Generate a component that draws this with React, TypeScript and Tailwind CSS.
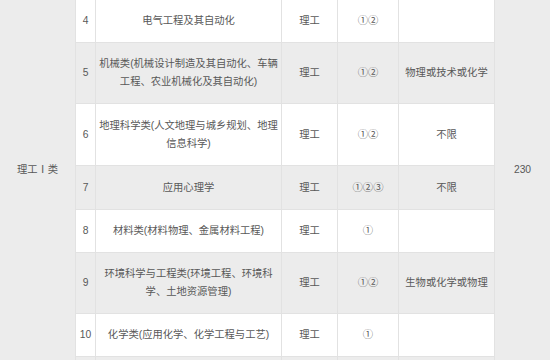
const rows = [
  { no: '4', major: '电气工程及其自动化', type: '理工', pick: '①②', req: '', h: 'h-[43px]', gray: false },
  { no: '5', major: '机械类(机械设计制造及其自动化、车辆工程、农业机械化及其自动化)', type: '理工', pick: '①②', req: '物理或技术或化学', h: 'h-[61px]', gray: true },
  { no: '6', major: '地理科学类(人文地理与城乡规划、地理信息科学)', type: '理工', pick: '①②', req: '不限', h: 'h-[62px]', gray: false },
  { no: '7', major: '应用心理学', type: '理工', pick: '①②③', req: '不限', h: 'h-[44px]', gray: true },
  { no: '8', major: '材料类(材料物理、金属材料工程)', type: '理工', pick: '①', req: '', h: 'h-[43px]', gray: false },
  { no: '9', major: '环境科学与工程类(环境工程、环境科学、土地资源管理)', type: '理工', pick: '①②', req: '生物或化学或物理', h: 'h-[61px]', gray: true },
  { no: '10', major: '化学类(应用化学、化学工程与工艺)', type: '理工', pick: '①', req: '', h: 'h-[43px]', gray: false },
  { no: '', major: '', type: '', pick: '', req: '', h: 'h-[43px]', gray: true },
];

const cell = 'flex items-center justify-center text-center border-r border-b border-[#e2e2e2]';

export default function App() {
  return (
    <div
      className="flex w-[550px] h-[360px] overflow-hidden bg-white text-[10.3px] leading-[18px] text-[#585858]"
      style={{ fontFamily: '"Liberation Sans", "Noto Sans CJK SC", sans-serif' }}
    >
      <div className="w-[76px] shrink-0 bg-[#ececec] border-r border-[#e2e2e2] flex justify-center pt-[161px]">
        理工Ⅰ类
      </div>

      <div className="flex flex-col w-[419px] shrink-0">
        {rows.map((r, i) => (
          <div key={i} className={`flex shrink-0 ${r.h} ${r.gray ? 'bg-[#ececec]' : 'bg-white'}`}>
            <div className={`${cell} w-[20px]`}>{r.no}</div>
            <div className={`${cell} w-[186px] px-[2px]`}>{r.major}</div>
            <div className={`${cell} w-[56px]`}>{r.type}</div>
            <div className={`${cell} w-[61px]`}>{r.pick}</div>
            <div className={`${cell} w-[96px]`}>{r.req}</div>
          </div>
        ))}
      </div>

      <div className="flex-1 bg-[#ececec] flex justify-center pt-[161px]">230</div>
    </div>
  );
}
